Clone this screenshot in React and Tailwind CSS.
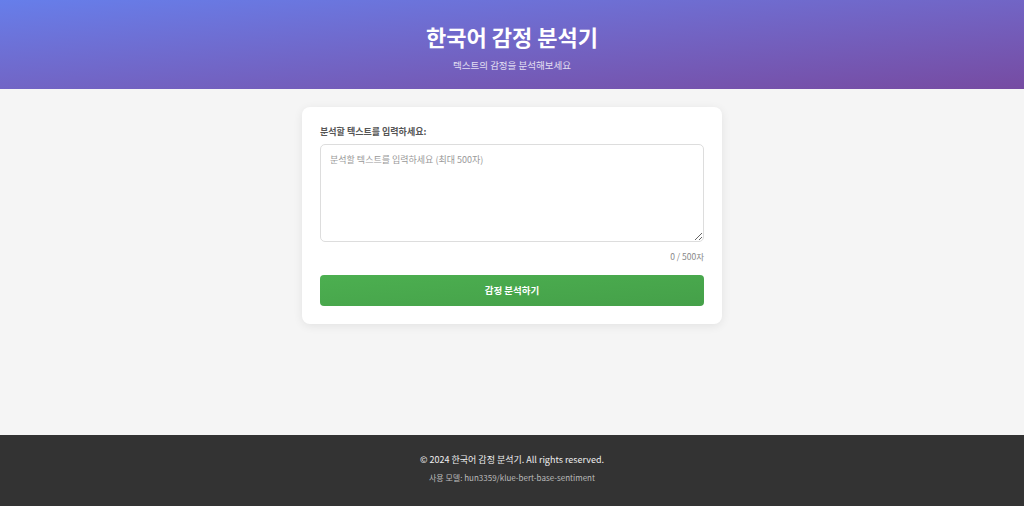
export default function App() {
  return (
    <div
      className="min-h-screen flex flex-col bg-[#f5f5f5] text-[#333]"
      style={{ fontFamily: '"Noto Sans CJK KR", "Noto Sans", sans-serif' }}
    >
      <header className="h-[89px] bg-gradient-to-br from-[#667eea] to-[#764ba2] text-white flex flex-col items-center pt-[21px]">
        <h1 className="text-[22px] leading-[30px] font-bold">한국어 감정 분석기</h1>
        <p className="text-[9.5px] leading-[14px] mt-[7px] text-white/80">텍스트의 감정을 분석해보세요</p>
      </header>

      <main className="flex-1 flex justify-center pt-[18px]">
        <div className="w-[420px] h-fit bg-white rounded-[8px] shadow-[0_2px_10px_rgba(0,0,0,0.08)] p-[18px]">
          <label className="block text-[9px] leading-[12px] font-bold text-[#555] mt-[1px] mb-[6px]">
            분석할 텍스트를 입력하세요:
          </label>
          <textarea
            className="block w-full h-[98px] border-[1.5px] border-[#ddd] rounded-[5px] px-[9px] py-[9px] text-[9px] leading-[12px] placeholder:text-[#999] resize-y outline-none"
            placeholder="분석할 텍스트를 입력하세요 (최대 500자)"
          />
          <div className="text-right text-[8.5px] leading-[12px] text-[#888] mt-[8px]">0 / 500자</div>
          <button className="w-full h-[31px] mt-[13px] rounded-[4px] bg-gradient-to-br from-[#4caf50] to-[#45a049] text-white text-[9.5px] font-bold">
            감정 분석하기
          </button>
        </div>
      </main>

      <footer className="h-[71px] bg-[#333] flex flex-col items-center pt-[18px]">
        <p className="text-[9px] leading-[14px] text-[#eee]">© 2024 한국어 감정 분석기. All rights reserved.</p>
        <p className="text-[8px] leading-[12px] mt-[5px] text-[#bbb]">사용 모델: hun3359/klue-bert-base-sentiment</p>
      </footer>
    </div>
  );
}
